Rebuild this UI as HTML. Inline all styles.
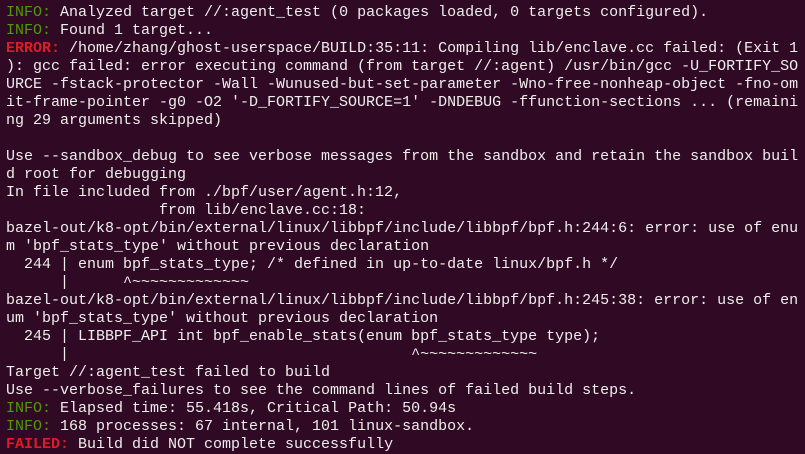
<!DOCTYPE html>
<html><head><style>
html,body{margin:0;padding:0;background:#300a24;width:805px;height:453px;overflow:hidden}
pre{margin:0;position:absolute;left:6px;top:4px;font-family:"Liberation Mono","DejaVu Sans Mono",monospace;font-size:15px;line-height:18px;color:#eeeeec;white-space:pre}
.g{color:#4e9a06}.r{color:#e01b24;font-weight:bold}
</style></head><body>
<pre><span class="g">INFO:</span> Analyzed target //:agent_test (0 packages loaded, 0 targets configured).
<span class="g">INFO:</span> Found 1 target...
<span class="r">ERROR:</span> /home/zhang/ghost-userspace/BUILD:35:11: Compiling lib/enclave.cc failed: (Exit 1
): gcc failed: error executing command (from target //:agent) /usr/bin/gcc -U_FORTIFY_SO
URCE -fstack-protector -Wall -Wunused-but-set-parameter -Wno-free-nonheap-object -fno-om
it-frame-pointer -g0 -O2 '-D_FORTIFY_SOURCE=1' -DNDEBUG -ffunction-sections ... (remaini
ng 29 arguments skipped)

Use --sandbox_debug to see verbose messages from the sandbox and retain the sandbox buil
d root for debugging
In file included from ./bpf/user/agent.h:12,
                 from lib/enclave.cc:18:
bazel-out/k8-opt/bin/external/linux/libbpf/include/libbpf/bpf.h:244:6: error: use of enu
m 'bpf_stats_type' without previous declaration
  244 | enum bpf_stats_type; /* defined in up-to-date linux/bpf.h */
      |      ^~~~~~~~~~~~~~
bazel-out/k8-opt/bin/external/linux/libbpf/include/libbpf/bpf.h:245:38: error: use of en
um 'bpf_stats_type' without previous declaration
  245 | LIBBPF_API int bpf_enable_stats(enum bpf_stats_type type);
      |                                      ^~~~~~~~~~~~~~
Target //:agent_test failed to build
Use --verbose_failures to see the command lines of failed build steps.
<span class="g">INFO:</span> Elapsed time: 55.418s, Critical Path: 50.94s
<span class="g">INFO:</span> 168 processes: 67 internal, 101 linux-sandbox.
<span class="r">FAILED:</span> Build did NOT complete successfully</pre>
</body></html>
